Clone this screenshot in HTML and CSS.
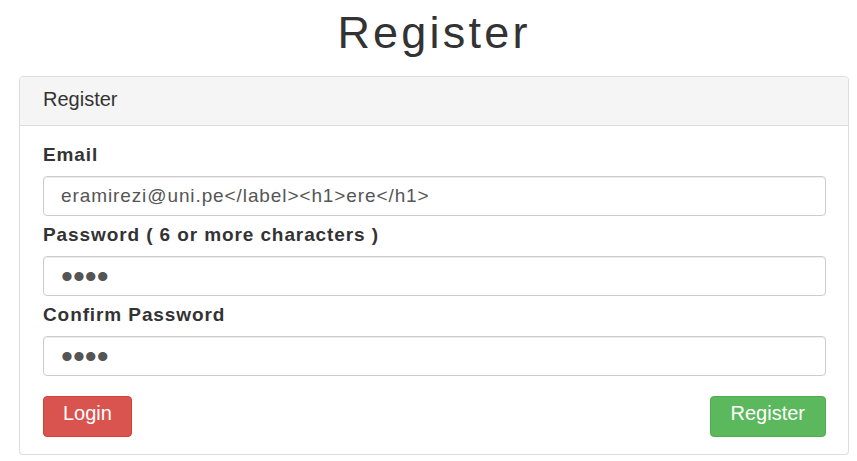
FILE: index.html
```html
<!DOCTYPE html>
<html lang="en">
<head>
<meta charset="utf-8">
<title>Register</title>
<link rel="stylesheet" href="styles.css">
</head>
<body>
<div class="container">
  <h1 class="title">Register</h1>
  <div class="panel">
    <div class="panel-heading">Register</div>
    <form class="panel-body">
      <div class="form-group">
        <label class="label" for="email">Email</label>
        <input class="control" id="email" type="text" value="eramirezi@uni.pe&lt;/label&gt;&lt;h1&gt;ere&lt;/h1&gt;">
      </div>
      <div class="form-group">
        <label class="label" for="pw">Password ( 6 or more characters )</label>
        <input class="control control-pw" id="pw" type="password" value="1234">
      </div>
      <div class="form-group">
        <label class="label" for="pw2">Confirm Password</label>
        <input class="control control-pw" id="pw2" type="password" value="1234">
      </div>
      <div class="actions">
        <button type="button" class="btn btn-danger">Login</button>
        <button type="submit" class="btn btn-success">Register</button>
      </div>
    </form>
  </div>
</div>
</body>
</html>
```
FILE: styles.css
```css
html, body {
  margin: 0;
  padding: 0;
  background: #fff;
}
body {
  font-family: "Liberation Sans", Arial, sans-serif;
  color: #333;
}
.container {
  width: 830px;
  margin-left: 19px;
}
.title {
  margin: 8px 0 18px;
  font-size: 45px;
  font-weight: 400;
  line-height: 50px;
  letter-spacing: 3.2px;
  text-align: center;
  color: #333;
}
.panel {
  border: 1px solid #ddd;
  border-radius: 4px;
  box-shadow: 0 1px 1px rgba(0,0,0,.05);
  background: #fff;
}
.panel-heading {
  background: #f5f5f5;
  border-bottom: 1px solid #ddd;
  border-radius: 3px 3px 0 0;
  padding: 10px 23px 14px;
  font-size: 20px;
  line-height: 24px;
  color: #333;
}
.panel-body {
  display: block;
  margin: 0;
  padding: 18px 22px 17px 23px;
}
.form-group {
  display: flex;
  flex-direction: column;
  margin-bottom: 8px;
}
.label {
  font-weight: 700;
  font-size: 19px;
  line-height: 22px;
  letter-spacing: 0.9px;
  margin-bottom: 10px;
  color: #333;
}
.control {
  box-sizing: border-box;
  height: 40px;
  width: 100%;
  margin: 0;
  padding: 0 17px;
  font-family: "Liberation Sans", Arial, sans-serif;
  font-size: 19px;
  letter-spacing: 0.9px;
  color: #555;
  background: #fff;
  border: 1px solid #ccc;
  border-radius: 4px;
  box-shadow: inset 0 1px 1px rgba(0,0,0,.075);
  outline: none;
}
.control-pw {
  font-size: 34px;
  letter-spacing: 0;
  padding-left: 17px;
}
.actions {
  display: flex;
  justify-content: space-between;
  margin-top: 20px;
}
.btn {
  font-family: "Liberation Sans", Arial, sans-serif;
  font-size: 20px;
  line-height: 24px;
  padding: 4px 20px 13px;
  height: 41px;
  box-sizing: border-box;
  color: #fff;
  border: 1px solid transparent;
  border-radius: 4px;
  cursor: pointer;
}
.btn-danger {
  background: #d9534f;
  border-color: #d43f3a;
  padding-left: 19px;
  padding-right: 19px;
}
.btn-success {
  background: #5cb85c;
  border-color: #4cae4c;
}
```
